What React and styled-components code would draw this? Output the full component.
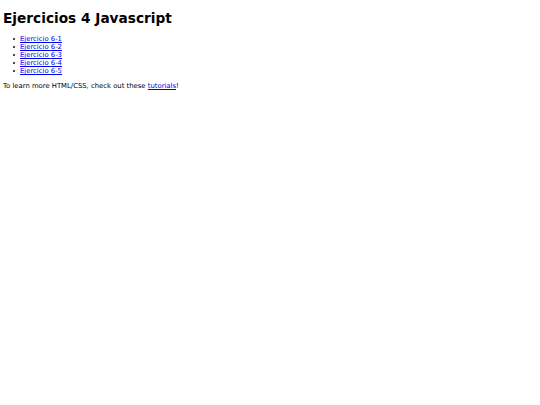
import React from "react";
import styled, { createGlobalStyle } from "styled-components";

const Global = createGlobalStyle`
  body {
    margin: 4px 3px;
    font-family: "DejaVu Sans", Verdana, sans-serif;
    font-size: 6.85px;
    color: #000;
    background: #fff;
  }
`;

const Title = styled.h1`
  font-size: 13.7px;
  font-weight: bold;
  margin: 6px 0 9px;
`;

const List = styled.ul`
  margin: 0 0 7px;
  padding-left: 17px;
  list-style: none;
  line-height: 8px;
`;

const Item = styled.li`
  &::before {
    content: "";
    display: inline-block;
    width: 2px;
    height: 2px;
    border-radius: 50%;
    background: #111;
    margin-left: -7px;
    margin-right: 5px;
    vertical-align: 1.5px;
  }
`;

const Link = styled.a`
  color: #0000ee;
  text-decoration: underline;
`;

const Text = styled.p`
  margin: 0;
`;

export default function App() {
  const items = ["6-1", "6-2", "6-3", "6-4", "6-5"];
  return (
    <>
      <Global />
      <Title>Ejercicios 4 Javascript</Title>
      <List>
        {items.map((n) => (
          <Item key={n}>
            <Link href="#">Ejercicio {n}</Link>
          </Item>
        ))}
      </List>
      <Text>
        To learn more HTML/CSS, check out these <Link href="#">tutorials</Link>!
      </Text>
    </>
  );
}
